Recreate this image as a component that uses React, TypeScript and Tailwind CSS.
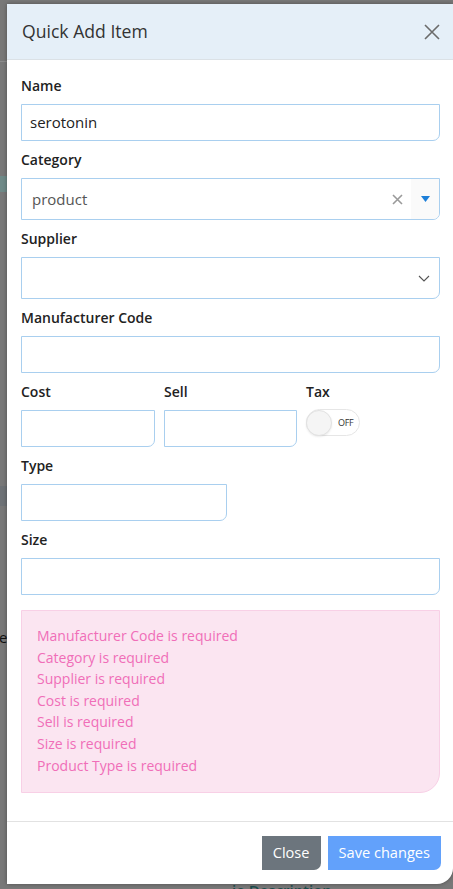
import React from 'react';

const errors = [
  'Manufacturer Code is required',
  'Category is required',
  'Supplier is required',
  'Cost is required',
  'Sell is required',
  'Size is required',
  'Product Type is required',
];

function Label({ children }: { children: React.ReactNode }) {
  return <label className="block text-[14px] leading-[20px] font-semibold text-[#222] mb-2">{children}</label>;
}

function TextInput({ value, className = '' }: { value?: string; className?: string }) {
  return (
    <div
      className={`h-[37px] border border-[#a9cfef] rounded-br-[7px] bg-white flex items-center px-2 text-[15px] text-[#222] ${className}`}
    >
      {value}
    </div>
  );
}

export default function App() {
  return (
    <div
      className="relative w-[453px] h-[889px] overflow-hidden bg-[#787878]"
      style={{ fontFamily: '"Open Sans", "Noto Sans", Arial, sans-serif' }}
    >
      {/* bits of the page behind the backdrop */}
      <div className="absolute left-0 top-[61px] w-[7px] h-px bg-[#8c8c8c]" />
      <div className="absolute left-0 top-[176px] w-[7px] h-[16px] bg-[#6f8a88]" />
      <div className="absolute left-0 top-[486px] w-[7px] h-[20px] bg-[#6e7276]" />
      <div className="absolute left-0 top-[626px] text-[15px] text-[#111] -ml-[1px]">e</div>
      <div className="absolute left-[232px] top-[880px] text-[15px] leading-[20px] font-semibold text-[#1c4d4d]">ie Description</div>

      <div className="relative ml-[7px] mt-[4px] w-[446px] h-[880px] bg-white rounded-br-[16px] shadow-[0_0_4px_rgba(0,0,0,0.35)] flex flex-col">
        {/* header */}
        <div className="h-[56px] bg-[#e5eff8] border-b border-[#dbe1e6] flex items-center justify-between pl-[15px] pr-[12px] shrink-0">
          <h5 className="text-[17.6px] text-[#333] leading-none">Quick Add Item</h5>
          <svg width="16" height="16" viewBox="0 0 16 16" className="mr-[1px]">
            <path d="M1 1L15 15M15 1L1 15" stroke="#6b6b6b" strokeWidth="1.6" />
          </svg>
        </div>

        {/* body */}
        <div className="flex-1 pt-[16px] pl-[14px] pr-[13px]">
          <Label>Name</Label>
          <TextInput value="serotonin" className="mb-[9px]" />

          <Label>Category</Label>
          <div className="h-[42px] border border-[#a9cfef] rounded-br-[7px] flex items-center mb-[9px] overflow-hidden">
            <span className="flex-1 pl-[10px] text-[15px] text-[#555]">product</span>
            <svg width="11" height="11" viewBox="0 0 11 11" className="mr-[8px]">
              <path d="M1 1L10 10M10 1L1 10" stroke="#9a9a9a" strokeWidth="1.6" />
            </svg>
            <div className="w-[28px] h-full bg-[#fafafa] flex items-center justify-center">
              <svg width="9" height="6" viewBox="0 0 9 6">
                <path d="M0 0H9L4.5 6Z" fill="#1d7fd9" />
              </svg>
            </div>
          </div>

          <Label>Supplier</Label>
          <div className="h-[42px] border border-[#a9cfef] rounded-br-[7px] flex items-center justify-end pr-[9px] mb-[9px]">
            <svg width="12" height="7" viewBox="0 0 12 7">
              <path d="M1 1L6 6L11 1" stroke="#555" strokeWidth="1.1" fill="none" />
            </svg>
          </div>

          <Label>Manufacturer Code</Label>
          <TextInput className="mb-[9px]" />

          <div className="flex gap-[9px] mb-[9px]">
            <div className="w-[134px]">
              <Label>Cost</Label>
              <TextInput />
            </div>
            <div className="w-[133px]">
              <Label>Sell</Label>
              <TextInput />
            </div>
            <div>
              <Label>Tax</Label>
              <div className="w-[54px] h-[27px] -mt-[1px] rounded-full border border-[#e6e6e6] bg-white flex items-center relative">
                <div className="w-[26px] h-[26px] rounded-full bg-[#f5f5f5] border border-[#e2e2e2] shadow-[0_1px_2px_rgba(0,0,0,0.08)] -ml-px" />
                <span className="ml-[6px] text-[9px] text-[#333] tracking-[-0.3px]">OFF</span>
              </div>
            </div>
          </div>

          <Label>Type</Label>
          <TextInput className="w-[206px] mb-[9px]" />

          <Label>Size</Label>
          <TextInput className="mb-[15px]" />

          <div className="bg-[#fbe5f1] border border-[#f8d0e6] rounded-br-[20px] pt-[14px] pb-[16px] pl-[15px]">
            {errors.map((e) => (
              <div key={e} className="text-[14px] leading-[21.6px] text-[#f06eb8]">
                {e}
              </div>
            ))}
          </div>
        </div>

        {/* footer */}
        <div className="border-t border-[#e2e2e2] pt-[14px] pb-[14px] pr-[12px] flex justify-end gap-[7px] shrink-0">
          <button className="h-[34px] px-[11px] bg-[#6c757d] text-white text-[14.6px] rounded-br-[7px]">Close</button>
          <button className="h-[34px] px-[11px] bg-[#62a1fb] text-white text-[14.6px] rounded-br-[7px]">Save changes</button>
        </div>
      </div>
    </div>
  );
}
